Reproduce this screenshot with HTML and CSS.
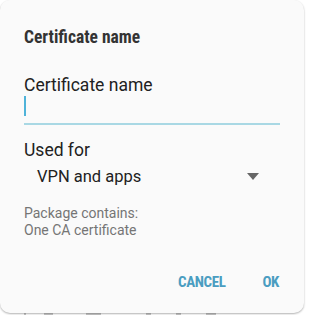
FILE: index.html
```html
<!DOCTYPE html>
<html>
<head>
<meta charset="utf-8">
<link rel="stylesheet" href="styles.css">
</head>
<body>
<div class="dialog">
  <div class="title">Certificate name</div>
  <div class="label">Certificate name</div>
  <div class="input"><span class="cursor"></span></div>
  <div class="label used">Used for</div>
  <div class="select">
    <span class="select-value">VPN and apps</span>
    <svg class="arrow" width="12" height="7" viewBox="0 0 12 7"><polygon points="0,0 12,0 6,7" fill="#666"/></svg>
  </div>
  <div class="info">Package contains:<br>One CA certificate</div>
  <div class="actions">
    <span class="btn">CANCEL</span>
    <span class="btn">OK</span>
  </div>
</div>
<div class="behind">
  <span class="mark m1"></span><span class="mark m2"></span><span class="mark m3"></span><span class="mark m4"></span><span class="mark m5"></span><span class="mark m6"></span>
</div>
</body>
</html>
```
FILE: styles.css
```css
html, body {
  margin: 0;
  padding: 0;
  background: #ffffff;
  font-family: Roboto, "Noto Sans", sans-serif;
  overflow: hidden;
}
.dialog {
  box-sizing: border-box;
  width: 304px;
  height: 313px;
  background: #fafafa;
  border-radius: 10px;
  box-shadow: 0 1px 2px rgba(0,0,0,0.3);
  padding: 27px 24px 0 24px;
  position: relative;
  z-index: 1;
}
.title {
  font-size: 17.5px;
  font-weight: 700;
  line-height: 20px;
  color: #333;
  font-stretch: 84%;
}
.label {
  margin-top: 28px;
  font-size: 17.5px;
  line-height: 20px;
  color: #212121;
}
.input {
  height: 27px;
  border-bottom: 2px solid #a9d8e4;
}
.cursor {
  display: block;
  margin-top: 1px;
  width: 1.5px;
  height: 20px;
  background: #4fb3d9;
}
.label.used {
  margin-top: 15px;
}
.select {
  margin-top: 7px;
  display: flex;
  align-items: center;
  justify-content: space-between;
  padding: 0 21px 0 13px;
  height: 20px;
}
.select-value {
  font-size: 16.5px;
  line-height: 20px;
  color: #212121;
}
.arrow {
  display: block;
  margin-top: -1px;
}
.info {
  margin-top: 18px;
  font-size: 14px;
  line-height: 17px;
  color: #757575;
}
.actions {
  margin-top: 33px;
  display: flex;
  justify-content: flex-end;
  gap: 37px;
  padding-right: 1px;
}
.btn {
  font-size: 15px;
  font-weight: 700;
  line-height: 20px;
  color: #4a9dc1;
  font-stretch: 75%;
  letter-spacing: -0.4px;
}
.behind {
  display: flex;
  height: 2px;
  padding-top: 0;
}
.mark {
  display: block;
  height: 2px;
  background: #c8c8c8;
}
.m1 { margin-left: 24px; width: 2px; }
.m2 { margin-left: 18px; width: 9px; }
.m3 { margin-left: 33px; width: 15px; }
.m4 { margin-left: 45px; width: 5px; }
.m5 { margin-left: 25px; width: 5px; }
.m6 { margin-left: 25px; width: 10px; }
```
